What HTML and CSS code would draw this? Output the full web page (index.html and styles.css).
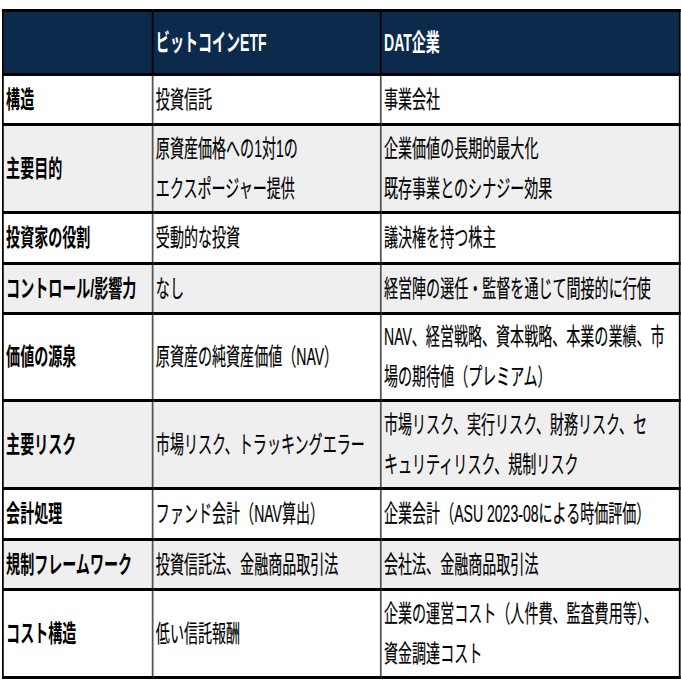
FILE: index.html
```html
<!DOCTYPE html>
<html lang="ja">
<head>
<meta charset="utf-8">
<title>ビットコインETFとDAT企業の比較</title>
<link rel="stylesheet" href="styles.css">
</head>
<body>
<div class="page">
  <div class="scaler">
    <table class="cmp">
      <colgroup>
        <col class="c1"><col class="c2"><col class="c3">
      </colgroup>
      <thead>
        <tr class="h-head">
          <th></th>
          <th>ビットコインETF</th>
          <th>DAT企業</th>
        </tr>
      </thead>
      <tbody>
        <tr class="h1 w">
          <th>構造</th>
          <td>投資信託</td>
          <td>事業会社</td>
        </tr>
        <tr class="h2 g">
          <th>主要目的</th>
          <td>原資産価格への1対1の<br>エクスポージャー提供</td>
          <td>企業価値の長期的最大化<br>既存事業とのシナジー効果</td>
        </tr>
        <tr class="h1b w">
          <th>投資家の役割</th>
          <td>受動的な投資</td>
          <td>議決権を持つ株主</td>
        </tr>
        <tr class="h1 g">
          <th>コントロール/影響力</th>
          <td>なし</td>
          <td>経営陣の選任・監督を通じて間接的に行使</td>
        </tr>
        <tr class="h2b w">
          <th>価値の源泉</th>
          <td>原資産の純資産価値（NAV）</td>
          <td>NAV、経営戦略、資本戦略、本業の業績、市<br>場の期待値（プレミアム）</td>
        </tr>
        <tr class="h2 g">
          <th>主要リスク</th>
          <td>市場リスク、トラッキングエラー</td>
          <td>市場リスク、実行リスク、財務リスク、セ<br>キュリティリスク、規制リスク</td>
        </tr>
        <tr class="h1b w">
          <th>会計処理</th>
          <td>ファンド会計（NAV算出）</td>
          <td>企業会計（ASU 2023-08による時価評価）</td>
        </tr>
        <tr class="h1 g">
          <th>規制フレームワーク</th>
          <td>投資信託法、金融商品取引法</td>
          <td>会社法、金融商品取引法</td>
        </tr>
        <tr class="h2 w">
          <th>コスト構造</th>
          <td>低い信託報酬</td>
          <td>企業の運営コスト（人件費、監査費用等）、<br>資金調達コスト</td>
        </tr>
      </tbody>
    </table>
  </div>
</div>
</body>
</html>
```

FILE: styles.css
```css
html, body {
  margin: 0;
  padding: 0;
  background: #ffffff;
  overflow: hidden;
}

.page {
  width: 681px;
  height: 681px;
  overflow: hidden;
  padding-top: 9px;
  padding-left: 2px;
  box-sizing: border-box;
}

.scaler {
  width: 1157px;
  transform: scaleX(0.585);
  transform-origin: 0 0;
}

.cmp {
  width: 1157px;
  table-layout: fixed;
  border-collapse: collapse;
  font-family: "Liberation Sans", "Noto Sans CJK JP", sans-serif;
  font-size: 24px;
  line-height: 40px;
  color: #000000;
}

.c1 { width: 256px; }
.c2 { width: 390px; }
.c3 { width: 511px; }

.cmp th,
.cmp td {
  border-top: 3px solid #000000;
  border-bottom: 3px solid #000000;
  border-left: 3px solid #555555;
  border-right: 3px solid #555555;
  padding: 0 4px;
  text-align: left;
  vertical-align: middle;
  white-space: nowrap;
}

.cmp th:first-child { border-left-color: #000000; }
.cmp td:last-child,
.cmp th:last-child { border-right-color: #000000; }

.cmp tbody th {
  font-weight: 700;
  color: #000000;
}

.cmp td {
  font-weight: 400;
  -webkit-text-stroke: 0.2px #000000;
}

.cmp thead th {
  background: #0c2a4c;
  color: #ffffff;
  font-weight: 700;
  border-left-color: #000000;
  border-right-color: #000000;
}

.h-head { height: 64px; }
.h1 { height: 50px; }
.h1b { height: 51px; }
.h2 { height: 88px; }
.h2b { height: 87px; }

.w th, .w td { background: #ffffff; }
.g th, .g td { background: #efefef; }
```
